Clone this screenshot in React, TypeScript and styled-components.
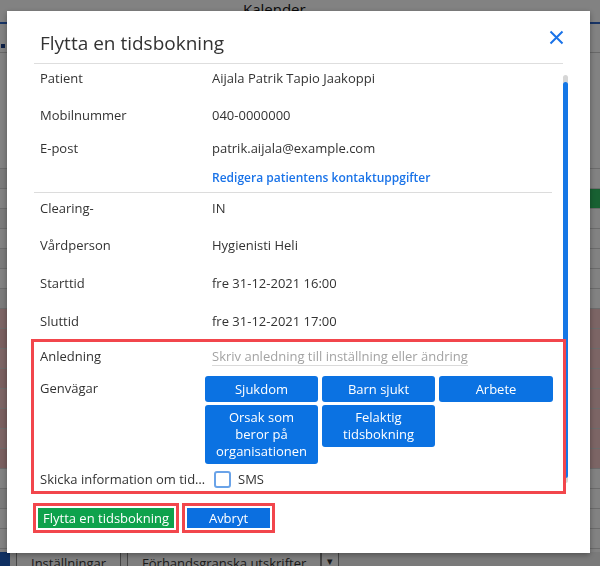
import styled, { createGlobalStyle } from 'styled-components';

const GlobalStyle = createGlobalStyle`
  html, body {
    margin: 0;
    padding: 0;
  }
  body {
    width: 600px;
    height: 566px;
    overflow: hidden;
    font-family: "Open Sans", "Noto Sans", sans-serif;
    color: #333;
  }
`;

const slots = [
  { left: '#fff', right: '#fff' },
  { left: '#f2f2f2', right: '#fff' },
  { left: '#fff', right: '#2fbf63' },
  { left: '#f2f2f2', right: '#fff' },
  { left: '#fff', right: '#fff' },
  { left: '#f2f2f2', right: '#fff' },
  { left: '#fff', right: '#fff' },
  { left: '#f2f2f2', right: '#fff' },
  { left: '#f4c6c6', right: '#f4c6c6' },
  { left: '#f0bcbc', right: '#f4c6c6' },
  { left: '#f4c6c6', right: '#f4c6c6' },
  { left: '#f0bcbc', right: '#f4c6c6' },
  { left: '#f4c6c6', right: '#f4c6c6' },
  { left: '#f0bcbc', right: '#f4c6c6' },
  { left: '#f4c6c6', right: '#f4c6c6' },
  { left: '#f0bcbc', right: '#f4c6c6' },
  { left: '#fff', right: '#fff' },
  { left: '#f2f2f2', right: '#fff' },
  { left: '#fff', right: '#fff' },
  { left: '#fff', right: '#fff' },
];

const shortcuts = [
  'Sjukdom',
  'Barn sjukt',
  'Arbete',
  'Orsak som beror på organisationen',
  'Felaktig tidsbokning',
];

const App = () => {
  return (
    <>
      <GlobalStyle />
      <Back.Page>
        <Back.TopBar>Kalender</Back.TopBar>
        <Back.Tools>
          <Back.Dot />
        </Back.Tools>
        <Back.Calendar>
          {slots.map((s, i) => (
            <Back.Slot key={i}>
              <Back.Cell $bg={s.left} />
              <Back.Cell $bg={s.right} />
            </Back.Slot>
          ))}
        </Back.Calendar>
        <Back.BottomBar>
          <Back.Corner />
          <Back.Button>Inställningar</Back.Button>
          <Back.Button>Förhandsgranska utskrifter</Back.Button>
          <Back.Caret>▾</Back.Caret>
        </Back.BottomBar>
      </Back.Page>

      <Styled.Backdrop>
        <Styled.Modal>
          <Styled.Header>
            <Styled.Title>Flytta en tidsbokning</Styled.Title>
            <Styled.Close aria-label="Stäng">
              <svg width="15" height="15" viewBox="0 0 15 15">
                <path d="M1.5 1.5 L13.5 13.5 M13.5 1.5 L1.5 13.5" stroke="#1a73e8" strokeWidth="2" fill="none" />
              </svg>
            </Styled.Close>
          </Styled.Header>

          <Styled.Body>
            <Styled.Content>
              <Styled.Field $pt={4}>
                <span>Patient</span>
                <span>Aijala Patrik Tapio Jaakoppi</span>
              </Styled.Field>
              <Styled.Field $pt={17}>
                <span>Mobilnummer</span>
                <span>040-0000000</span>
              </Styled.Field>
              <Styled.Field $pt={13}>
                <span>E-post</span>
                <span>patrik.aijala@example.com</span>
              </Styled.Field>
              <Styled.Field $pt={10}>
                <span />
                <Styled.Link>Redigera patientens kontaktuppgifter</Styled.Link>
              </Styled.Field>
              <Styled.Divider />
              <Styled.Field $pt={5}>
                <span>Clearing-</span>
                <span>IN</span>
              </Styled.Field>
              <Styled.Field $pt={17}>
                <span>Vårdperson</span>
                <span>Hygienisti Heli</span>
              </Styled.Field>
              <Styled.Field $pt={18}>
                <span>Starttid</span>
                <span>fre 31-12-2021 16:00</span>
              </Styled.Field>
              <Styled.Field $pt={18}>
                <span>Sluttid</span>
                <span>fre 31-12-2021 17:00</span>
              </Styled.Field>

              <Styled.Marked>
                <Styled.Field $pt={15}>
                  <span>Anledning</span>
                  <span>
                    <Styled.Placeholder>Skriv anledning till inställning eller ändring</Styled.Placeholder>
                  </span>
                </Styled.Field>
                <Styled.Field $pt={10}>
                  <Styled.ShortLabel>Genvägar</Styled.ShortLabel>
                  <Styled.Shortcuts>
                    {shortcuts.map((s) => (
                      <Styled.Shortcut key={s} type="button">
                        {s}
                      </Styled.Shortcut>
                    ))}
                  </Styled.Shortcuts>
                </Styled.Field>
                <Styled.Field $pt={5}>
                  <Styled.Ellipsis>Skicka information om tidsbokningen</Styled.Ellipsis>
                  <Styled.CheckRow>
                    <Styled.Check />
                    <span>SMS</span>
                  </Styled.CheckRow>
                </Styled.Field>
              </Styled.Marked>
            </Styled.Content>
            <Styled.Track>
              <Styled.Thumb />
            </Styled.Track>
          </Styled.Body>

          <Styled.Footer>
            <Styled.Action $bg="#0ea24c" type="button">
              Flytta en tidsbokning
            </Styled.Action>
            <Styled.Action $bg="#0b6fe0" $w={83} type="button">
              Avbryt
            </Styled.Action>
          </Styled.Footer>
        </Styled.Modal>
      </Styled.Backdrop>
    </>
  );
};

export default App;

const Back = {
  Page: styled.div`
    width: 600px;
    height: 566px;
    display: flex;
    flex-direction: column;
    background: #fff;
  `,
  TopBar: styled.div`
    height: 22px;
    padding-left: 243px;
    font-size: 15px;
    line-height: 18px;
    color: #111;
    border-bottom: 2px solid #2f66c8;
  `,
  Tools: styled.div`
    height: 28px;
    border-bottom: 1px solid #ccc;
    display: flex;
    align-items: flex-end;
  `,
  Dot: styled.div`
    width: 4px;
    height: 4px;
    margin: 0 0 4px 1px;
    background: #1a3f8a;
  `,
  Calendar: styled.div`
    flex: 1;
    display: flex;
    flex-direction: column;
    padding-top: 96px;
  `,
  Slot: styled.div`
    height: 19px;
    display: flex;
    justify-content: space-between;
    border-bottom: 1px solid #d4d4d4;
  `,
  Cell: styled.div<{ $bg: string }>`
    width: 20px;
    background: ${(p) => p.$bg};
  `,
  BottomBar: styled.div`
    height: 14px;
    display: flex;
    gap: 6px;
    align-items: flex-start;
    background: #f0f0f0;
  `,
  Corner: styled.div`
    width: 10px;
    height: 14px;
    background: #1f5fc0;
  `,
  Button: styled.div`
    height: 18px;
    padding: 0 14px;
    border: 1px solid #888;
    font-size: 13px;
    line-height: 20px;
    background: #fafafa;
    &:first-of-type {
      margin-left: 4px;
    }
  `,
  Caret: styled.div`
    height: 18px;
    width: 16px;
    margin-left: -6px;
    border: 1px solid #888;
    font-size: 11px;
    text-align: center;
    background: #fafafa;
  `,
};

const Styled = {
  Backdrop: styled.div`
    position: fixed;
    inset: 0;
    background: rgba(0, 0, 0, 0.49);
    padding: 11px 0 0 7px;
  `,
  Modal: styled.div`
    width: 583px;
    height: 542px;
    background: #fff;
    display: flex;
    flex-direction: column;
    box-shadow: 0 2px 6px rgba(0, 0, 0, 0.35);
  `,
  Header: styled.div`
    height: 53px;
    box-sizing: border-box;
    margin: 0 27px;
    padding: 12px 0 0 6px;
    display: flex;
    align-items: center;
    justify-content: space-between;
    border-bottom: 1px solid #dedede;
  `,
  Title: styled.h2`
    margin: 0;
    font-size: 19px;
    font-weight: 400;
    color: #333;
  `,
  Close: styled.button`
    align-self: flex-start;
    margin: 7px -1px 0 0;
    padding: 0;
    border: 0;
    background: none;
    width: 15px;
    height: 15px;
    display: flex;
  `,
  Body: styled.div`
    height: 430px;
    margin-left: 27px;
    display: flex;
    gap: 11px;
  `,
  Content: styled.div`
    width: 518px;
    display: flex;
    flex-direction: column;
  `,
  Field: styled.div<{ $pt: number }>`
    display: grid;
    grid-template-columns: 172px 1fr;
    padding: ${(p) => p.$pt}px 0 0 6px;
    font-size: 13px;
    line-height: 20px;
    color: #333;
  `,
  Link: styled.span`
    color: #1a73e8;
    font-weight: 600;
    font-size: 12px;
  `,
  Divider: styled.div`
    margin-top: 4px;
    height: 1px;
    background: #dcdcdc;
  `,
  Marked: styled.div`
    position: relative;
    &::after {
      content: '';
      position: absolute;
      top: 8px;
      left: -3px;
      right: -14px;
      bottom: -5px;
      border: 3px solid #f2464c;
      pointer-events: none;
    }
  `,
  Placeholder: styled.span`
    color: #a3a3a3;
    border-bottom: 1px solid #dadada;
  `,
  ShortLabel: styled.span`
    padding-top: 2px;
  `,
  Shortcuts: styled.div`
    margin-left: -7px;
    display: grid;
    grid-template-columns: 113px 113px 114px;
    gap: 3px 4px;
    align-items: start;
  `,
  Shortcut: styled.button`
    min-height: 26px;
    padding: 4px 4px;
    border: 0;
    border-radius: 3px;
    background: #0b72e2;
    color: #fff;
    font-family: inherit;
    font-size: 13px;
    line-height: 17px;
    text-wrap: balance;
  `,
  Ellipsis: styled.span`
    padding-right: 6px;
    white-space: nowrap;
    overflow: hidden;
    text-overflow: ellipsis;
  `,
  CheckRow: styled.label`
    display: flex;
    align-items: center;
    gap: 7px;
    padding-left: 2px;
  `,
  Check: styled.span`
    width: 17px;
    height: 17px;
    box-sizing: border-box;
    border: 2px solid #6aa3e8;
    border-radius: 3px;
    background: #fff;
  `,
  Track: styled.div`
    margin-top: 11px;
    width: 5px;
    height: 408px;
    border-radius: 3px;
    background: #d6d6d6;
    display: flex;
    flex-direction: column;
  `,
  Thumb: styled.div`
    margin-top: 7px;
    height: 396px;
    border-radius: 3px;
    background: #1577e6;
  `,
  Footer: styled.div`
    display: flex;
    gap: 13px;
    padding: 14px 0 0 31px;
  `,
  Action: styled.button<{ $bg: string; $w?: number }>`
    height: 20px;
    width: ${(p) => (p.$w ? `${p.$w}px` : 'auto')};
    padding: 0 5px;
    border: 0;
    background: ${(p) => p.$bg};
    color: #fff;
    font-family: inherit;
    font-size: 13px;
    line-height: 20px;
    outline: 3px solid #f2464c;
    outline-offset: 2px;
  `,
};
